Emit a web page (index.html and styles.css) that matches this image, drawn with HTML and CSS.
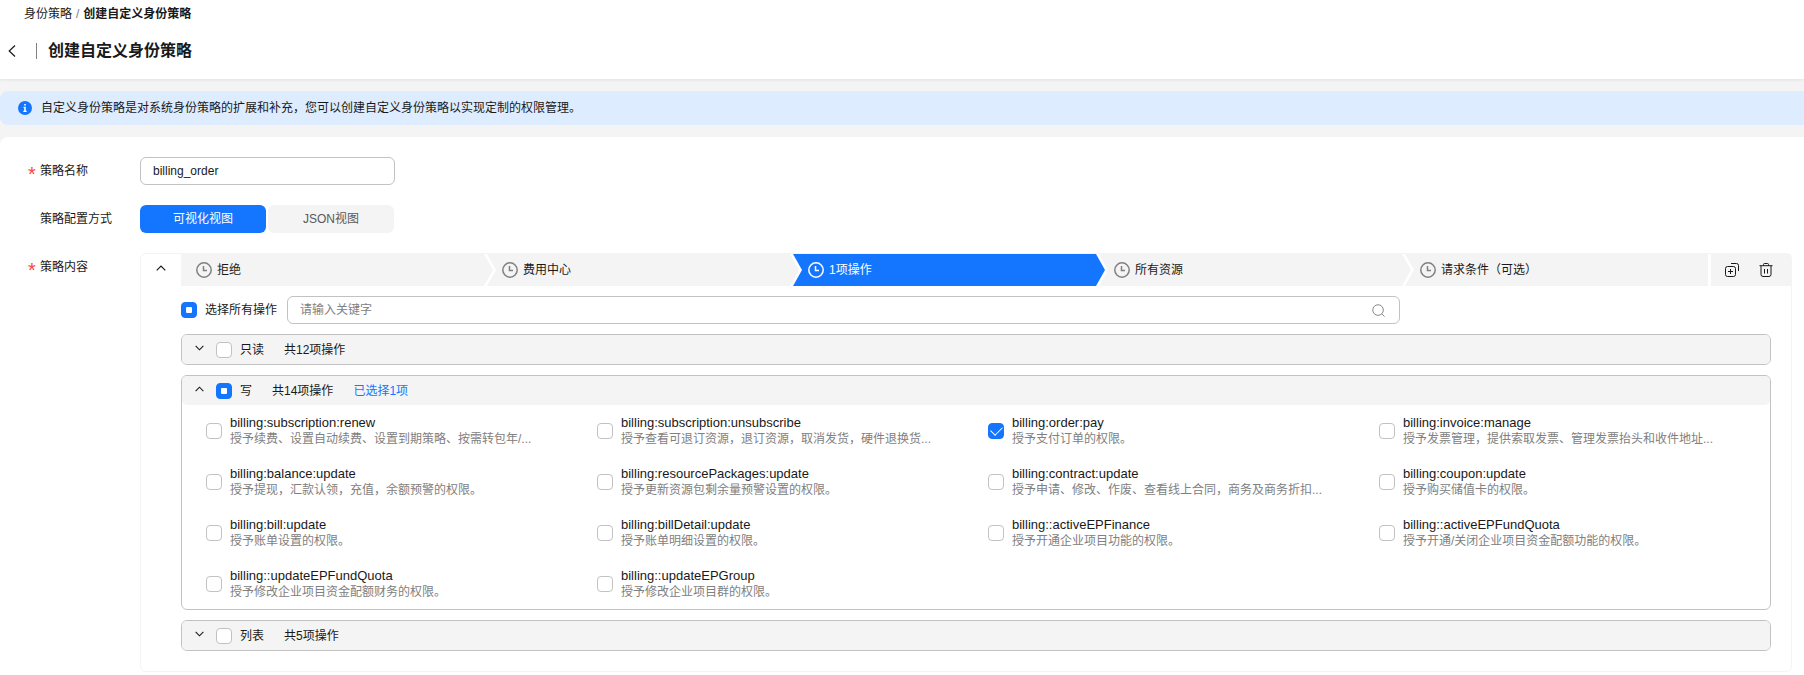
FILE: index.html
```html
<!DOCTYPE html>
<html lang="zh-CN">
  <head>
    <meta charset="UTF-8" />
    <meta name="viewport" content="width=device-width, initial-scale=1.0" />
    <title>创建自定义身份策略</title>
    <link rel="stylesheet" href="styles.css">
  </head>
  <body>
    <!-- shared icons -->
    <svg class="sprite" aria-hidden="true">
      <symbol id="i-clock" viewBox="0 0 16 16">
        <circle cx="8" cy="8" r="7.2" />
        <path d="M7.5 4v4.5H11" />
      </symbol>
      <symbol id="i-up" viewBox="0 0 10 6">
        <path d="M.7 5.3L5 1l4.3 4.3" />
      </symbol>
      <symbol id="i-down" viewBox="0 0 10 6">
        <path d="M.7.7L5 5 9.3.7" />
      </symbol>
    </svg>

    <header class="page-header">
      <nav class="breadcrumb">
        <a href="#">身份策略</a>
        <span class="slash">/</span>
        <span class="current">创建自定义身份策略</span>
      </nav>
      <div class="title-row">
        <a class="back" href="#" aria-label="返回">
          <svg width="8" height="12" viewBox="0 0 8 12"><path d="M7 .5L1.200 6 7 11.500" /></svg>
        </a>
        <h1>创建自定义身份策略</h1>
      </div>
    </header>

    <div class="alert">
      <svg width="14" height="14" viewBox="0 0 14 14">
        <circle cx="7" cy="7" r="7" fill="#1476ff" />
        <path d="M6.200 3h1.600v1.600H6.200zM5.500 5.800h2.300v4h.9V11H5.300V9.800h.9V7h-.7z" fill="#fff" />
      </svg>
      <p>自定义身份策略是对系统身份策略的扩展和补充，您可以创建自定义身份策略以实现定制的权限管理。</p>
    </div>

    <main class="card">
      <form class="form">
        <div class="form-row">
          <label class="form-label required" for="policyName">策略名称</label>
          <input class="input name-input" id="policyName" type="text" value="billing_order">
        </div>

        <div class="form-row">
          <span class="form-label">策略配置方式</span>
          <div class="view-switch">
            <button type="button" class="active">可视化视图</button>
            <button type="button">JSON视图</button>
          </div>
        </div>

        <div class="form-row">
          <span class="form-label required">策略内容</span>
          <section class="panel">
            <div class="panel-head">
              <button type="button" class="collapse" aria-label="收起">
                <svg class="chevron" width="10" height="6"><use href="#i-up" /></svg>
              </button>
              <ol class="steps">
                <li><svg class="clock" width="16" height="16"><use href="#i-clock" /></svg>拒绝</li>
                <li><svg class="clock" width="16" height="16"><use href="#i-clock" /></svg>费用中心</li>
                <li class="active"><svg class="clock" width="16" height="16"><use href="#i-clock" /></svg>1项操作</li>
                <li><svg class="clock" width="16" height="16"><use href="#i-clock" /></svg>所有资源</li>
                <li><svg class="clock" width="16" height="16"><use href="#i-clock" /></svg>请求条件（可选）</li>
              </ol>
              <div class="panel-actions">
                <button type="button" aria-label="复制">
                  <svg width="14" height="14" viewBox="0 0 14 14">
                    <rect x=".5" y="3.500" width="10" height="10" rx="2" />
                    <path d="M5.500 6v5M3 8.500h5M6 .5h5.500a2 2 0 0 1 2 2V8" />
                  </svg>
                </button>
                <button type="button" aria-label="删除">
                  <svg width="14" height="14" viewBox="0 0 14 14">
                    <path d="M.5 2.700h13M4.500 2.500V1.500a1 1 0 0 1 1-1h3a1 1 0 0 1 1 1v1M2 3v8.500a2 2 0 0 0 2 2h6a2 2 0 0 0 2-2V3M5.500 6v4.500M8.500 6v4.500" />
                  </svg>
                </button>
              </div>
            </div>

            <div class="panel-body">
              <div class="toolbar">
                <label class="select-all"><input type="checkbox" class="check partial">选择所有操作</label>
                <div class="search">
                  <input class="input" type="text" placeholder="请输入关键字" aria-label="请输入关键字">
                  <svg width="13" height="13" viewBox="0 0 14 14">
                    <circle cx="6.500" cy="6.500" r="5.700" />
                    <path d="M10.500 10.500l3 3" />
                  </svg>
                </div>
              </div>

              <div class="group">
                <div class="group-head">
                  <svg class="chevron" width="9" height="6"><use href="#i-down" /></svg>
                  <label><input type="checkbox" class="check">只读</label>
                  <span>共12项操作</span>
                </div>
              </div>

              <div class="group">
                <div class="group-head">
                  <svg class="chevron" width="9" height="6"><use href="#i-up" /></svg>
                  <label><input type="checkbox" class="check partial">写</label>
                  <span>共14项操作</span>
                  <span class="selected">已选择1项</span>
                </div>
                <div class="actions">
                  <label class="action">
                    <input type="checkbox" class="check">
                    <span class="text">billing:subscription:renew<small>授予续费、设置自动续费、设置到期策略、按需转包年/...</small></span>
                  </label>
                  <label class="action">
                    <input type="checkbox" class="check">
                    <span class="text">billing:subscription:unsubscribe<small>授予查看可退订资源，退订资源，取消发货，硬件退换货...</small></span>
                  </label>
                  <label class="action">
                    <input type="checkbox" class="check" checked>
                    <span class="text">billing:order:pay<small>授予支付订单的权限。</small></span>
                  </label>
                  <label class="action">
                    <input type="checkbox" class="check">
                    <span class="text">billing:invoice:manage<small>授予发票管理，提供索取发票、管理发票抬头和收件地址...</small></span>
                  </label>
                  <label class="action">
                    <input type="checkbox" class="check">
                    <span class="text">billing:balance:update<small>授予提现，汇款认领，充值，余额预警的权限。</small></span>
                  </label>
                  <label class="action">
                    <input type="checkbox" class="check">
                    <span class="text">billing:resourcePackages:update<small>授予更新资源包剩余量预警设置的权限。</small></span>
                  </label>
                  <label class="action">
                    <input type="checkbox" class="check">
                    <span class="text">billing:contract:update<small>授予申请、修改、作废、查看线上合同，商务及商务折扣...</small></span>
                  </label>
                  <label class="action">
                    <input type="checkbox" class="check">
                    <span class="text">billing:coupon:update<small>授予购买储值卡的权限。</small></span>
                  </label>
                  <label class="action">
                    <input type="checkbox" class="check">
                    <span class="text">billing:bill:update<small>授予账单设置的权限。</small></span>
                  </label>
                  <label class="action">
                    <input type="checkbox" class="check">
                    <span class="text">billing:billDetail:update<small>授予账单明细设置的权限。</small></span>
                  </label>
                  <label class="action">
                    <input type="checkbox" class="check">
                    <span class="text">billing::activeEPFinance<small>授予开通企业项目功能的权限。</small></span>
                  </label>
                  <label class="action">
                    <input type="checkbox" class="check">
                    <span class="text">billing::activeEPFundQuota<small>授予开通/关闭企业项目资金配额功能的权限。</small></span>
                  </label>
                  <label class="action">
                    <input type="checkbox" class="check">
                    <span class="text">billing::updateEPFundQuota<small>授予修改企业项目资金配额财务的权限。</small></span>
                  </label>
                  <label class="action">
                    <input type="checkbox" class="check">
                    <span class="text">billing::updateEPGroup<small>授予修改企业项目群的权限。</small></span>
                  </label>
                </div>
              </div>

              <div class="group">
                <div class="group-head">
                  <svg class="chevron" width="9" height="6"><use href="#i-down" /></svg>
                  <label><input type="checkbox" class="check">列表</label>
                  <span>共5项操作</span>
                </div>
              </div>
            </div>
          </section>
        </div>
      </form>
    </main>

    <script>
      // the half-selected state can only be set from script
      for (let box of document.querySelectorAll(".check.partial")) {
        box.indeterminate = true;
      }
    </script>
  </body>
</html>
```
FILE: styles.css
```css
* {
  box-sizing: border-box;
  margin: 0;
  padding: 0;
}
html {
  min-height: 100%;
  background-color: #f4f4f4;
}
body {
  display: flex;
  flex-direction: column;
  min-height: 100vh;
  font-family: "Liberation Sans", "Noto Sans CJK SC", sans-serif;
  font-size: 12px;
  line-height: 16px;
  color: #191919;
}
a {
  color: inherit;
  text-decoration: none;
}
button {
  font: inherit;
  border: none;
  background: none;
  cursor: pointer;
}
svg {
  flex: none;
  fill: none;
  stroke-width: 1.2;
}
.sprite {
  position: absolute;
  width: 0;
  height: 0;
}

.page-header {
  padding: 6px 0 16px;
  background-color: #fff;
  box-shadow: 0 1px 3px rgba(0, 0, 0, .08);
}
.breadcrumb {
  display: flex;
  gap: 4px;
  padding-left: 24px;
}
.breadcrumb .slash {
  color: #808080;
}
.breadcrumb .current {
  font-weight: bold;
}
.title-row {
  display: flex;
  align-items: center;
  margin-top: 17px;
  padding-left: 8px;
}
.back {
  display: flex;
  align-items: center;
  width: 29px;
  height: 16px;
  margin-right: 11px;
  border-right: 1px solid #808080;
}
.back svg {
  stroke: #191919;
}
h1 {
  font-size: 16px;
  line-height: 24px;
}

.alert {
  display: flex;
  align-items: center;
  gap: 9px;
  margin: 12px 0;
  padding: 9px 18px;
  border-radius: 8px 0 0 8px;
  background-color: #deecff;
}
.alert svg {
  stroke: none;
}

.card {
  flex: 1;
  padding: 20px 12px 3px 28px;
  border-radius: 8px 0 0 0;
  background-color: #fff;
}
.form {
  display: flex;
  flex-direction: column;
  gap: 20px;
}
.form-row {
  display: flex;
}
.form-label {
  flex: none;
  width: 112px;
  padding-left: 12px;
  line-height: 28px;
}
.form-label.required {
  padding-left: 0;
}
.form-label.required::before {
  content: "*";
  display: inline-block;
  width: 12px;
  color: #f54545;
  font-size: 20px;
  line-height: 12px;
  vertical-align: -6px;
}
.input {
  height: 28px;
  padding: 0 12px;
  border: 1px solid #c2c2c2;
  border-radius: 6px;
  outline: none;
  font: inherit;
  color: #191919;
  background-color: #fff;
}
.input::placeholder {
  color: #808080;
}
.name-input {
  width: 255px;
}
.view-switch {
  display: flex;
  gap: 2px;
}
.view-switch button {
  width: 126px;
  height: 28px;
  border-radius: 6px;
  color: #595959;
  background-color: #f4f4f4;
}
.view-switch .active {
  color: #fff;
  background-color: #1476ff;
}

.panel {
  flex: 1;
  min-width: 0;
  border: 1px solid #f4f4f4;
  border-radius: 6px;
}
.panel-head {
  display: flex;
  height: 32px;
}
.collapse {
  display: flex;
  align-items: center;
  justify-content: center;
  width: 40px;
  padding-bottom: 4px;
}
.chevron {
  stroke: #191919;
}
.steps {
  display: flex;
  flex: 1;
  list-style: none;
}
/* every step but the last ends in an arrow tip that reaches into the next one */
.steps li {
  display: flex;
  flex: 1 1 0;
  box-sizing: content-box;
  align-items: center;
  gap: 5px;
  margin-right: -6px;
  padding: 0 9px 0 15px;
  line-height: 18px;
  white-space: nowrap;
  background-color: #f4f4f4;
  clip-path: polygon(0 0, calc(100% - 9px) 0, 100% 50%, calc(100% - 9px) 100%, 0 100%, 9px 50%);
}
.steps li:first-child {
  clip-path: polygon(0 0, calc(100% - 9px) 0, 100% 50%, calc(100% - 9px) 100%, 0 100%);
}
.steps li:last-child {
  margin-right: 0;
  padding-right: 0;
  clip-path: polygon(0 0, 100% 0, 100% 100%, 0 100%, 9px 50%);
}
.steps .active {
  color: #fff;
  background-color: #1476ff;
}
.clock {
  stroke: #808080;
  stroke-width: 1.5;
}
.steps .active .clock {
  stroke: #fff;
}
.panel-actions {
  display: flex;
  align-items: center;
  gap: 20px;
  margin-left: 3px;
  padding: 0 18px 0 14px;
  background-color: #f4f4f4;
}
.panel-actions button {
  display: flex;
}
.panel-actions svg {
  stroke: #191919;
  stroke-width: 1;
}

.panel-body {
  display: flex;
  flex-direction: column;
  gap: 10px;
  padding: 10px 20px 20px 40px;
}
.toolbar {
  display: flex;
  width: calc(70% + 106px);
}
.select-all {
  display: flex;
  flex: none;
  align-items: center;
  gap: 8px;
  width: 106px;
}
.search {
  display: flex;
  flex: 1;
  align-items: center;
}
.search .input {
  width: 100%;
  padding-right: 36px;
}
.search svg {
  margin-left: -28px;
  stroke: #808080;
  stroke-width: 1;
}
.check {
  flex: none;
  width: 16px;
  height: 16px;
  border: 1px solid #c2c2c2;
  border-radius: 4px;
  appearance: none;
  background-color: #fff;
}
.check:checked,
.check:indeterminate {
  display: flex;
  align-items: center;
  justify-content: center;
  border-color: #1476ff;
  background-color: #1476ff;
}
.check:indeterminate::before {
  content: "";
  width: 6px;
  height: 6px;
  border-radius: 1px;
  background-color: #fff;
}
.check:checked::before {
  content: "";
  width: 10px;
  height: 6px;
  margin-bottom: 3px;
  border: solid #fff;
  border-width: 0 0 1px 1px;
  transform: rotate(-45deg);
}

.group {
  border: 1px solid #c2c2c2;
  border-radius: 6px;
}
.group-head {
  display: flex;
  align-items: center;
  gap: 20px;
  height: 29px;
  padding-left: 13px;
  border-radius: 5px;
  background-color: #f4f4f4;
}
.group-head label {
  display: flex;
  align-items: center;
  gap: 8px;
}
.group-head .chevron {
  margin: 0 -8px 3px 0;
}
.group-head .selected {
  color: #1476ff;
}
.actions {
  display: grid;
  grid-template-columns: repeat(4, 1fr);
  row-gap: 19px;
  padding: 10px 0 9px 24px;
}
.action {
  display: flex;
  align-items: center;
  gap: 8px;
  min-width: 0;
}
.action .text {
  min-width: 0;
  font-size: 13px;
}
.action small {
  display: block;
  overflow: hidden;
  font-size: 12px;
  white-space: nowrap;
  text-overflow: ellipsis;
  color: #808080;
}
```
